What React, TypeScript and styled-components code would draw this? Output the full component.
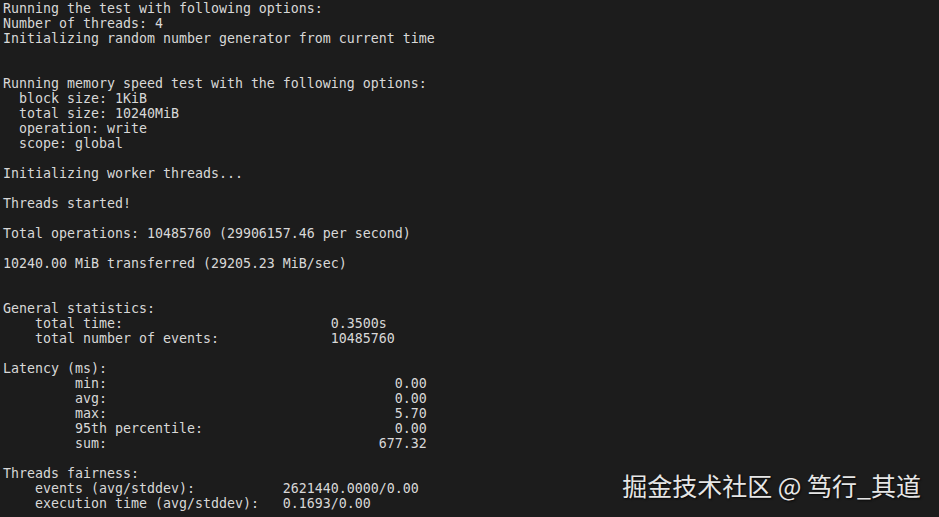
import React from "react";
import styled, { createGlobalStyle } from "styled-components";

const Global = createGlobalStyle`
  html, body { margin: 0; padding: 0; background: #1c1c1c; }
  #root { min-height: 517px; }
`;

const Screen = styled.div`
  position: relative;
  width: 939px;
  height: 517px;
  background: #1c1c1c;
  overflow: hidden;
`;

const Output = styled.pre`
  margin: 0;
  padding: 1px 0 0 3px;
  font-family: "DejaVu Sans Mono", monospace;
  font-size: 13.29px;
  line-height: 15px;
  color: #d8d8d8;
  white-space: pre;
`;

const Watermark = styled.div`
  position: absolute;
  right: 18px;
  top: 470px;
  font-family: "Noto Sans CJK SC", "Noto Sans", sans-serif;
  font-size: 25px;
  line-height: 30px;
  color: #e6e6e6;
  text-shadow: 1px 1px 2px rgba(0, 0, 0, 0.8);
  white-space: pre;
`;

const col = (left: string, c: number, right: string) =>
  left + " ".repeat(Math.max(1, c - left.length)) + right;
const rcol = (left: string, end: number, right: string) =>
  left + " ".repeat(Math.max(1, end - left.length - right.length)) + right;

const lines: string[] = [
  "Running the test with following options:",
  "Number of threads: 4",
  "Initializing random number generator from current time",
  "",
  "",
  "Running memory speed test with the following options:",
  "  block size: 1KiB",
  "  total size: 10240MiB",
  "  operation: write",
  "  scope: global",
  "",
  "Initializing worker threads...",
  "",
  "Threads started!",
  "",
  "Total operations: 10485760 (29906157.46 per second)",
  "",
  "10240.00 MiB transferred (29205.23 MiB/sec)",
  "",
  "",
  "General statistics:",
  col("    total time:", 41, "0.3500s"),
  col("    total number of events:", 41, "10485760"),
  "",
  "Latency (ms):",
  rcol("         min:", 53, "0.00"),
  rcol("         avg:", 53, "0.00"),
  rcol("         max:", 53, "5.70"),
  rcol("         95th percentile:", 53, "0.00"),
  rcol("         sum:", 53, "677.32"),
  "",
  "Threads fairness:",
  col("    events (avg/stddev):", 35, "2621440.0000/0.00"),
  col("    execution time (avg/stddev):", 35, "0.1693/0.00"),
];

export default function App() {
  return (
    <>
      <Global />
      <Screen>
        <Output>{lines.join("\n")}</Output>
        <Watermark>掘金技术社区 @ 笃行_其道</Watermark>
      </Screen>
    </>
  );
}
